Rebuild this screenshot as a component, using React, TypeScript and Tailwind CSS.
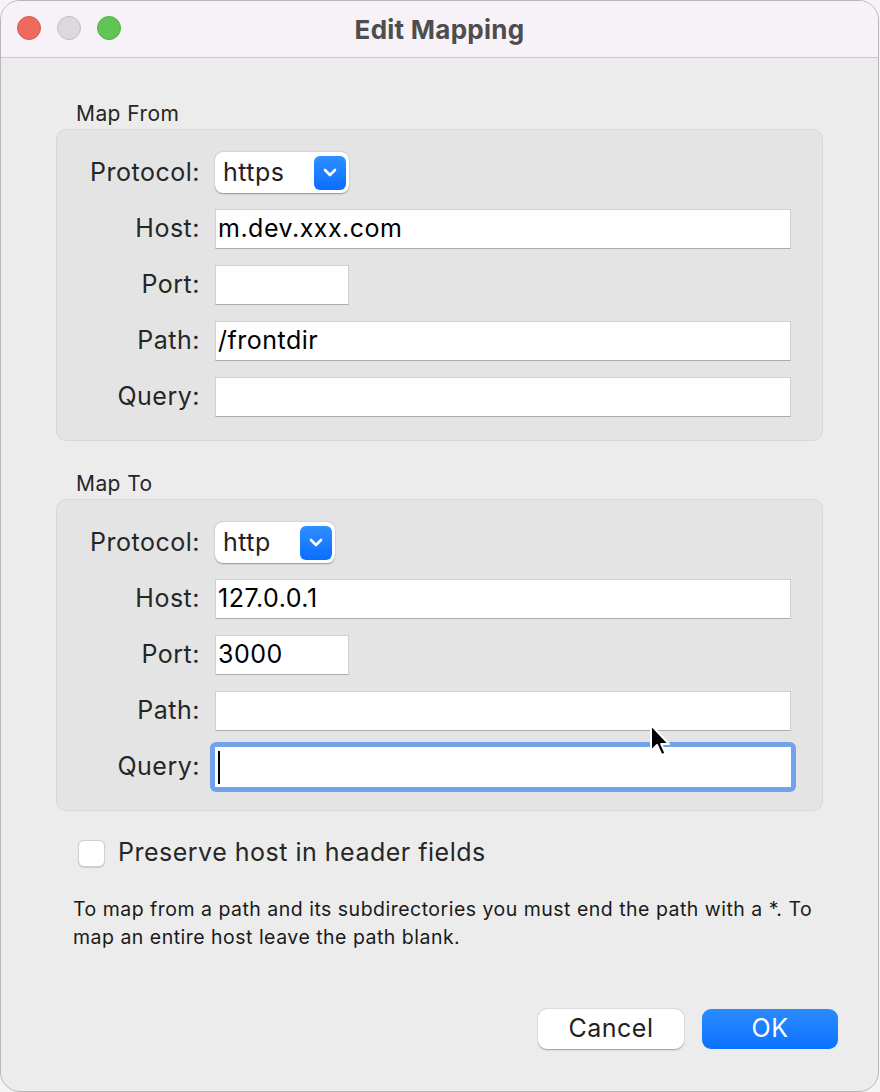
import React from "react";

const font = { fontFamily: "Inter, 'Noto Sans', sans-serif" };

function Field({ value, width, focused }: { value?: string; width?: string; focused?: boolean }) {
  if (focused) {
    return (
      <div className="relative h-[40px] w-full">
        <div className="absolute -inset-[5px] rounded-[6px] bg-[#72a3ea]" />
        <div className="relative flex h-full w-full items-center bg-white pl-[3px]">
          <div className="h-[33px] w-[2px] bg-black" />
        </div>
      </div>
    );
  }
  return (
    <div
      className={`flex h-[40px] items-center border border-[#d0d0d0] border-b-[#adadad] bg-white pl-[2px] text-[25px] tracking-[0.02em] text-black ${width ?? "w-full"}`}
    >
      {value}
    </div>
  );
}

function Select({ value, width }: { value: string; width: string }) {
  return (
    <div
      className={`flex h-[41px] items-center justify-between rounded-[8px] bg-white pl-[8px] pr-[3px] text-[25px] tracking-[0.02em] text-[#222] shadow-[0_0.5px_1.5px_rgba(0,0,0,0.35)] ${width}`}
    >
      <span>{value}</span>
      <span className="flex h-[34px] w-[32px] items-center justify-center rounded-[6px] bg-gradient-to-b from-[#2e8fff] to-[#0a6dff]">
        <svg width="14" height="9" viewBox="0 0 14 9" fill="none">
          <path d="M2 2l5 5 5-5" stroke="white" strokeWidth="2.6" strokeLinecap="round" strokeLinejoin="round" />
        </svg>
      </span>
    </div>
  );
}

function Row({ label, children }: { label: string; children: React.ReactNode }) {
  return (
    <div className="flex items-center">
      <div className="w-[144px] shrink-0 pr-[1px] text-right text-[25px] tracking-[0.02em] text-[#262626]">{label}</div>
      <div className="ml-[14px] flex flex-1">{children}</div>
    </div>
  );
}

function Group({ title, children }: { title: string; children: React.ReactNode }) {
  return (
    <div>
      <div className="h-[28px] pl-[20px] text-[21px] leading-[28px] tracking-[0.02em] text-[#262626]">{title}</div>
      <div className="mt-[1px] flex flex-col gap-4 rounded-[10px] border border-[#d8d8d8] bg-[#e4e4e4] pb-[23px] pr-[31px] pt-[22px]">
        {children}
      </div>
    </div>
  );
}

export default function App() {
  return (
    <div className="h-[1092px] w-[880px] bg-[#f4f4f4]" style={font}>
      <div className="relative flex h-[1092px] w-[879px] flex-col overflow-hidden rounded-[20px] border border-[#b8b8b8] bg-[#ececec]">
        <div className="relative flex h-[57px] shrink-0 items-center justify-center border-b border-[#cacaca] bg-[#f6f2f8]">
          <div className="absolute left-[16px] top-[15px] flex gap-[16px]">
            <span className="h-[24px] w-[24px] rounded-full border border-[#d9584d] bg-[#ee6a5f]" />
            <span className="h-[24px] w-[24px] rounded-full border border-[#c0bbc0] bg-[#dcd8dc]" />
            <span className="h-[24px] w-[24px] rounded-full border border-[#52ae47] bg-[#61c554]" />
          </div>
          <div className="text-[26px] font-bold tracking-[0.01em] text-[#4d4d4d]">Edit Mapping</div>
        </div>

        <div className="flex flex-1 flex-col px-[55px] pt-[42px]">
          <Group title="Map From">
            <Row label="Protocol:">
              <Select value="https" width="w-[134px]" />
            </Row>
            <Row label="Host:">
              <Field value="m.dev.xxx.com" />
            </Row>
            <Row label="Port:">
              <Field width="w-[134px]" />
            </Row>
            <Row label="Path:">
              <Field value="/frontdir" />
            </Row>
            <Row label="Query:">
              <Field />
            </Row>
          </Group>

          <div className="mt-[29px]">
            <Group title="Map To">
              <Row label="Protocol:">
                <Select value="http" width="w-[120px]" />
              </Row>
              <Row label="Host:">
                <Field value="127.0.0.1" />
              </Row>
              <Row label="Port:">
                <Field value="3000" width="w-[134px]" />
              </Row>
              <Row label="Path:">
                <Field />
              </Row>
              <Row label="Query:">
                <Field focused />
              </Row>
            </Group>
          </div>

          <div className="mt-[28px] flex h-[28px] items-center pl-[22px]">
            <span className="h-[27px] w-[27px] rounded-[6px] border border-[#cfcfcf] bg-white shadow-[0_0.5px_1px_rgba(0,0,0,0.15)]" />
            <span className="ml-[13px] text-[25px] tracking-[0.02em] text-[#262626]">Preserve host in header fields</span>
          </div>

          <p className="mt-[28px] pl-[17px] pr-[8px] text-[19.5px] leading-[28px] tracking-[0.025em] text-[#1a1a1a]">
            To map from a path and its subdirectories you must end the path with a *. To map an entire host leave the path blank.
          </p>

          <div className="mt-auto mb-[42px] flex justify-end gap-[18px]">
            <button className="h-[40px] w-[146px] rounded-[9px] bg-white text-[25px] tracking-[0.02em] text-[#222] shadow-[0_0.5px_1.5px_rgba(0,0,0,0.35)]">
              Cancel
            </button>
            <button className="-mr-[15px] h-[40px] w-[136px] rounded-[9px] bg-gradient-to-b from-[#2a8bff] to-[#0a72ff] text-[25px] tracking-[0.02em] text-white">
              OK
            </button>
          </div>
        </div>

        <svg className="absolute left-[648px] top-[722px]" width="26" height="38" viewBox="0 0 26 38">
          <path d="M2 2 L2 28 L8 22 L12.5 32 L16.5 30.3 L12.2 21 L20 21 Z" fill="black" stroke="white" strokeWidth="2" strokeLinejoin="round" />
        </svg>
      </div>
    </div>
  );
}
